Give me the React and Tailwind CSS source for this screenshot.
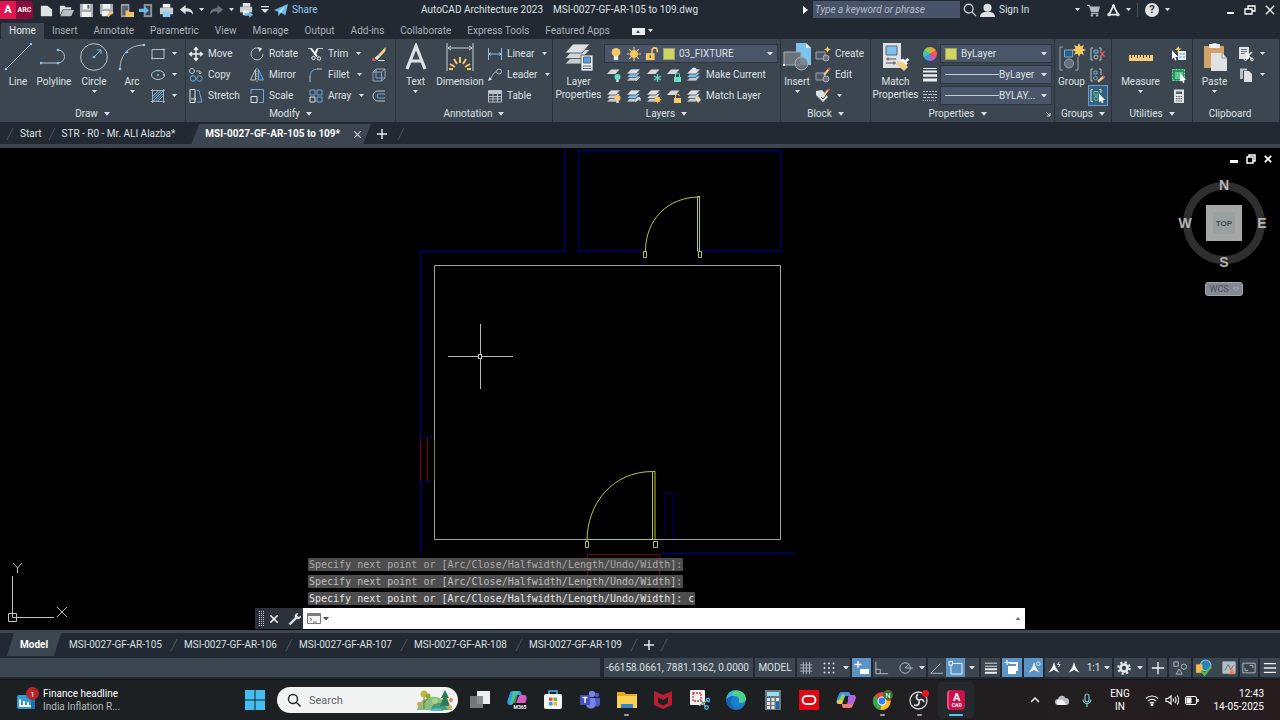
import React, { useState } from 'react';

// ---------- shared bits ----------

const Caret = ({ className = 'w-[7px]' }) => (
  <svg viewBox="0 0 8 5" className={`shrink-0 ${className}`} fill="#d9dee3"><path d="M0 0h8L4 5z" /></svg>
);

const Ico = ({ size = 'size-4', box = '0 0 16 16', children }) => (
  <svg viewBox={box} className={`shrink-0 ${size}`} fill="none" stroke="#b9c2ca" strokeWidth="1">
    {children}
  </svg>
);

const Slash = () => (
  <svg viewBox="0 0 20 20" className="w-5 h-5 shrink-0" stroke="#4c5661"><path d="M7 16L13 4" /></svg>
);

const Dot = ({ x, y, r = 1.3 }) => <circle cx={x} cy={y} r={r} fill="#8cc4ee" stroke="none" />;

// stack of three sheets used by the layer tools, drawn from the bottom up
const Sheets = ({ blue }) => (
  <g stroke="#3c4650" strokeWidth=".7">
    <path d="M5 9h9.500l-4.500 5H.500z" fill="#c4cad0" />
    <path d="M5 5.500h9.500l-4.500 5H.500z" fill={blue ? '#7fbce8' : '#ccd1d6'} />
    <path d="M5 2h9.500l-4.500 5H.500z" fill="#dde1e4" />
  </g>
);

const Sheet = () => <path d="M5 2.500h8.500l-4 4.500H1z" fill="#d3d8dc" stroke="none" />;

// ---------- ribbon icons ----------

const big = {
  line: <Ico size="size-7" box="0 0 28 28"><path d="M2 26L27 1" /><Dot x={2} y={26} /><Dot x={27} y={1} /></Ico>,
  polyline: <Ico size="size-7" box="0 0 28 28"><path d="M1 20h17a6.500 6.500 0 0 0 0-13" /><Dot x={1} y={20} /><Dot x={18} y={20} /><Dot x={18} y={7} /></Ico>,
  circle: <Ico size="size-7" box="0 0 28 28"><circle cx="14" cy="14" r="13.400" /><path d="M14 14l7-7m-4 0h4v4" stroke="#7db9e6" /><Dot x={14} y={14} /></Ico>,
  arc: <Ico size="size-7" box="0 0 28 28"><path d="M2 26C2 11 12 2 26 2" /><Dot x={2} y={26} /><Dot x={9} y={9} /><Dot x={26} y={2} /></Ico>,
  text: <Ico size="size-7" box="0 0 28 28"><path d="M5 26L14 3l9 23M8.500 18h11" stroke="#dde1e4" strokeWidth="3.200" /></Ico>,
  dimension: (
    <Ico size="size-7" box="0 0 28 28">
      <path d="M1 0v28M27 0v28M2 5h24M5 3L2 5l3 2M23 3l3 2-3 2" stroke="#c9d0d6" />
      <path d="M14 14v6M8 16l3 5M20 16l-3 5M4 21l5 3M24 21l-5 3M3 26h4M25 26h-4" stroke="#f6c865" strokeWidth="2" />
    </Ico>
  ),
  layer: (
    <Ico size="size-7" box="0 0 28 28">
      <g stroke="#3c4650" strokeWidth=".8">
        <path d="M8 12h17l-8 9H0z" fill="#c8cdd2" />
        <path d="M8 6.500h17l-8 9H0z" fill="#d0d5d9" />
        <path d="M8 1h17l-8 9H0z" fill="#dde1e4" />
        <path d="M16 12h12v16H16z" fill="#edf0f2" />
      </g>
      <path d="M18.500 14h7v6h-7z" fill="#4da3de" stroke="#5c6670" /><path d="M18 23h8M18 25.500h8" stroke="#59626c" />
    </Ico>
  ),
  insert: (
    <Ico size="size-7" box="0 0 28 28">
      <path d="M13 0h10l5 5v17H13z" fill="#7cc3ef" stroke="none" /><path d="M23 0l5 5h-5z" fill="#d9eefb" stroke="none" />
      <path d="M1 9h17v13H1z" fill="#6a727b" stroke="#a6adb4" /><circle cx="18.500" cy="20.500" r="6.500" fill="#737b84" fillOpacity=".8" stroke="#a6adb4" />
      <rect x="0" y="21" width="2" height="2" fill="#fff" stroke="none" />
    </Ico>
  ),
  match: (
    <Ico size="size-7" box="0 0 28 28">
      <path d="M1 0h18v25H1z" fill="#dde1e4" stroke="none" /><path d="M4 3h11v9H4z" fill="#7cc3ef" stroke="#5c6670" />
      <path d="M4 16h10M6 14.500v3M4 20h10M12 18.500v3" stroke="#4a525b" />
      <path d="M14 21l6-4 6 7-4 4z" fill="#f2cf85" stroke="none" /><path d="M18 18.500l3-1.500 4 4.500M22.500 19l4-3" stroke="#fff" strokeWidth="2.500" />
    </Ico>
  ),
  group: (
    <Ico size="size-7" box="0 0 28 28">
      <path d="M5 4H2v23h3M17 27h3V14" stroke="#98a1a9" /><path d="M6.500 7h8v7h-8z" fill="#2f5f88" stroke="#77a8cf" />
      <circle cx="11" cy="20.500" r="4.500" fill="#68717a" stroke="#9aa2aa" />
      <path d="M21 0l1.500 3.500L26 2l-1.500 3.500L28 7l-3.500 1.500L26 12l-3.500-1.500L21 14l-1.500-3.500L16 12l1.500-3.500L14 7l3.500-1.500L16 2l3.500 1.500z" fill="#fbcb5f" stroke="none" />
    </Ico>
  ),
  measure: (
    <Ico size="size-7" box="0 0 28 28">
      <path d="M2 12h24v6H2z" fill="#f3cc78" stroke="none" /><path d="M4.500 12v3M7.500 12v2M10.500 12v3M13.500 12v2M16.500 12v3M19.500 12v2M22.500 12v3" stroke="#4f4530" />
    </Ico>
  ),
  paste: (
    <Ico size="size-7" box="0 0 28 28">
      <path d="M3 3h20v22H3z" fill="#d2a267" stroke="none" /><path d="M8 1h3c0-1 5-1 5 0h3v4H8z" fill="#eef0f1" stroke="none" />
      <path d="M10 10h11l5 5v13H10z" fill="#dfe2e5" stroke="none" /><path d="M21 10v5h5" stroke="#939aa1" />
    </Ico>
  ),
};

const bulb = (fill) => <g stroke="none"><circle cx="11.500" cy="10" r="3" fill={fill} /><path d="M10.300 12.500h2.400V15h-2.400z" fill="#dfe3e6" /></g>;
const sun = <g stroke="#f7c863"><circle cx="11.500" cy="11.500" r="2.300" fill="#f7c863" /><path d="M11.500 7.500v8M7.500 11.500h8M8.700 8.700l5.600 5.600M14.300 8.700l-5.600 5.600" strokeWidth=".8" /></g>;
const blockBase = <g><path d="M1 6h9v7H1z" fill="#4f5862" stroke="#9aa3ab" /><circle cx="11" cy="12" r="3" fill="#6b747d" stroke="#a6adb4" /></g>;

const small = {
  rect: <Ico><path d="M2 3.500h12v9H2z" /><Dot x={2} y={12.500} r={1} /><Dot x={14} y={3.500} r={1} /></Ico>,
  ellipse: <Ico><ellipse cx="8" cy="8" rx="6.500" ry="4.500" /><Dot x={8} y={8} r={1} /><Dot x={14} y={8} r={1} /><Dot x={8} y={3.500} r={1} /></Ico>,
  hatch: <Ico><path d="M2.500 1v14M13.500 1v14M1 2.500h14M1 13.500h14" strokeWidth=".8" /><path d="M3 8l5-5M3 13l10-10M8 13l5-5M3 10.500L10.500 3M5.500 13l7.500-7.500" stroke="#7db9e6" /></Ico>,
  move: <Ico><g stroke="#eef1f3" strokeWidth="1.400"><path d="M8 2v12M2 8h12M6 4l2-2.500L10 4M6 12l2 2.500 2-2.500M4 6L1.500 8 4 10M12 6l2.500 2-2.500 2" /></g></Ico>,
  copy: <Ico><circle cx="4" cy="4" r="2.500" /><path d="M8 4h4v3M10.500 5.500L12 7l1.500-1.500" /><circle cx="5" cy="11.500" r="2.800" stroke="#6fa8d6" /><circle cx="11.500" cy="11.500" r="2.800" stroke="#6fa8d6" /></Ico>,
  stretch: <Ico><path d="M2 1.500h5v13H2zM3 11h5M6.500 9.500L8 11l-1.500 1.500" stroke="#dde1e4" /><path d="M9 2.500h2l3 11.500h-5" stroke="#6fa8d6" /></Ico>,
  rotate: <Ico><path d="M11.500 3A6 6 0 1 0 14 8" /><path d="M9 1l4 1.500L10.500 6z" fill="#e3e7ea" stroke="none" /></Ico>,
  mirror: <Ico><path d="M6.500 2.500V13H1.500z" /><path d="M9.500 2.500V13h5z" stroke="#6fa8d6" fill="#355a78" /><path d="M8 1v14" strokeDasharray="1.500 1" /></Ico>,
  scale: <Ico><path d="M2 8.500h6v6H2z" stroke="#dde1e4" /><path d="M2 6V1.500h12.500v13H10" stroke="#6fa8d6" /></Ico>,
  trim: <Ico><path d="M0 2.500h4M9 2.500h6" /><path d="M3 2.500l6 8M9.500 3l-3 6" stroke="#f0f2f4" strokeWidth="2" /><circle cx="5.500" cy="12" r="1.700" stroke="#f0f2f4" /><circle cx="11" cy="12.500" r="1.700" stroke="#f0f2f4" /></Ico>,
  fillet: <Ico><path d="M2 15V9" /><path d="M2 10c0-5 3-8 8-8" stroke="#6fa8d6" /><path d="M9 2h5" /></Ico>,
  array: <Ico><path d="M2 9h5v5H2z" stroke="#dde1e4" /><g stroke="#6fa8d6"><path d="M2 2h5v5H2zM9 2h5v5H9zM9 9h5v5H9z" /></g></Ico>,
  erase: <Ico><path d="M14.500 1L7 9l2 2 5.500-6z" fill="#f6cf83" stroke="none" /><path d="M7 9l2 2-3 3-2.500-2z" fill="#e4e7e9" stroke="none" /><path d="M2 12l3 2.500H1.500z" fill="#e3564c" stroke="#e3564c" /><path d="M7 14.500h7" stroke="#dde1e4" /></Ico>,
  box: <Ico><path d="M2 5h8.500v9H2zM5 2h9v9M2 5l3-3M10.500 5L14 2M10.500 14l3.500-3" stroke="#8fa5b6" /><path d="M5 2v9h9" stroke="#6fa8d6" /></Ico>,
  offset: <Ico><path d="M14 3H7a5 5 0 0 0 0 10h7" /><path d="M14 6H8a2 2 0 0 0 0 4h6" stroke="#6fa8d6" /></Ico>,
  linear: <Ico><path d="M1.500 2v12M14.500 2v12M2 8h12" stroke="#8fbde0" /><path d="M4 6.500L2 8l2 1.500M12 6.500L14 8l-2 1.500" stroke="#8fbde0" /></Ico>,
  leader: <Ico><circle cx="12" cy="4.500" r="2.500" /><path d="M9.500 5C6 5 6 9 3 12" /><path d="M1 14l1.500-4 2.500 2.500z" fill="#dde1e4" stroke="none" /></Ico>,
  table: <Ico><path d="M1.500 2.500h13v11.500h-13zM1.500 5.500h13M1.500 8.500h13M1.500 11h13M6 5v9M10.500 5v9" /><path d="M2 3h12v2H2z" fill="#b9c2ca" stroke="none" /></Ico>,
  lyOff: <Ico><Sheet />{bulb('#67e0c3')}</Ico>,
  lyIso: <Ico><Sheets blue /><path d="M10 14l4-4" stroke="#fff" /></Ico>,
  lyFreeze: <Ico><Sheet /><path d="M11.500 7v8M8 9l7 4M15 9l-7 4" stroke="#5fdcbc" strokeWidth="1.300" /></Ico>,
  lyLock: <Ico><Sheet /><path d="M8 10h7v5H8z" fill="#67e0c3" stroke="none" /><path d="M9.500 10V8a2 2 0 0 1 4 0v2" stroke="#67e0c3" /></Ico>,
  lyCurrent: <Ico><Sheets blue /><circle cx="8" cy="3" r="2.500" fill="#e3e7ea" stroke="none" /></Ico>,
  lyOn: <Ico><Sheets />{bulb('#f7c863')}</Ico>,
  lyUniso: <Ico><Sheets blue /><path d="M9 14l5-4M11 10h3v3" stroke="#fff" /></Ico>,
  lyThaw: <Ico><Sheets />{sun}</Ico>,
  lyUnlock: <Ico><Sheet /><path d="M8 10h7v5H8z" fill="#f7c863" stroke="none" /><path d="M9.500 10V8.500a2 2 0 0 1 4-.500" stroke="#f7c863" /></Ico>,
  lyMatch: <Ico><Sheets /><path d="M9 10l3-2 3 4-3 3z" fill="#f0dcae" stroke="none" /></Ico>,
  create: <Ico>{blockBase}<path d="M12.500 0l1 2.500L16 3.500l-2.500 1-1 2.500-1-2.500L9 3.500l2.500-1z" fill="#fbcb5f" stroke="none" /></Ico>,
  edit: <Ico>{blockBase}<path d="M9 8l5-6" stroke="#f2c98b" strokeWidth="2" /><path d="M13 3l2-2" stroke="#e3564c" strokeWidth="2" /></Ico>,
  tag: <Ico><path d="M1 3l6-1 6 7-5 5-7-7z" fill="#dde1e4" stroke="none" /><path d="M6 9l2 2 4-5" stroke="#3c4650" /><path d="M9 7l4-5" stroke="#f2c98b" strokeWidth="2" /><path d="M13 3l1.500-2" stroke="#e3564c" strokeWidth="2" /></Ico>,
  wheel: (
    <Ico>
      <g stroke="none">
        <path d="M8 8V1a7 7 0 0 1 6 3.500z" fill="#f59a3c" /><path d="M8 8l6-3.500a7 7 0 0 1 0 7z" fill="#ee5a4a" /><path d="M8 8l6 3.500A7 7 0 0 1 8 15z" fill="#c25bd0" />
        <path d="M8 8v7a7 7 0 0 1-6-3.500z" fill="#4c8fe8" /><path d="M8 8l-6 3.500a7 7 0 0 1 0-7z" fill="#3fc7b5" /><path d="M8 8L2 4.500A7 7 0 0 1 8 1z" fill="#8bd04f" />
      </g>
    </Ico>
  ),
  weight: <Ico><g stroke="#eceff1"><path d="M1 1.500h14" /><path d="M1 4.500h14" strokeWidth="2" /><path d="M1 8.500h14" strokeWidth="2.500" /><path d="M1 13h14" strokeWidth="3" /></g></Ico>,
  ltype: <Ico><path d="M1 3.500h14" strokeDasharray="2 1" /><path d="M1 6.500h14" strokeDasharray="4 1" /><path d="M1 9.500h14" strokeDasharray="3 1" /><path d="M1 12.500h14" strokeDasharray="1 1" /></Ico>,
  ungroup: <Ico><path d="M3 2H1v12h2M9 14h2V9M9 2h2v3" /><path d="M4 4h4v3H4z" fill="#2f5f88" stroke="#77a8cf" /><circle cx="6" cy="11" r="2" /><path d="M10 5.500l4.500 5M14.500 5.500l-4.500 5" stroke="#e3564c" strokeWidth="1.500" /></Ico>,
  groupEdit: <Ico><path d="M3 2H1v12h2M9 2h2v6" /><path d="M4 4h3v3H4z" stroke="#77a8cf" /><circle cx="5.500" cy="11" r="1.800" stroke="#77a8cf" /><path d="M8 14.500l6-5" stroke="#f2c98b" strokeWidth="2.300" /><path d="M13 10.500l1.500-1.500" stroke="#e3564c" strokeWidth="2" /></Ico>,
  groupSel: <Ico><path d="M3 1.500H1v12h2M9 1.500h2V5" stroke="#dde1e4" /><path d="M4 3.500h4v3.500H4z" stroke="#52d48a" /><circle cx="6" cy="10.500" r="2" stroke="#52d48a" /><path d="M9 5.500l6 6.500-2.500.2 1 2.500-1.500.600-1-2.500-2 1.700z" fill="#fff" stroke="none" /></Ico>,
  qselect: <Ico><path d="M7 5h8v9H7z" fill="#eaf1f6" stroke="none" /><path d="M8.500 8h2M8.500 11h2M12 8h2M12 11h2" stroke="#3a8cd0" /><path d="M1 4l6 7-2.500 0 1 3-1.500.500-1-3L1 13z" fill="#fff" stroke="none" /><path d="M8 0L4 4h3L6 6.500l4.500-4H8z" fill="#fbcb5f" stroke="none" /></Ico>,
  selAll: <Ico><path d="M1.500 2.500h12v11h-12z" fill="#2f8f5b" stroke="#67e0a3" strokeDasharray="2 1" /><path d="M4 5h8v7H4z" fill="#56cf8a" stroke="none" /><path d="M9 6l6 7-2.500 0 1 2.500-1.500.500-1-2.500L9 14.500z" fill="#fff" stroke="none" /></Ico>,
  calc: <Ico><path d="M3 1.500h10v13.500H3z" fill="#dfe2e5" stroke="none" /><path d="M5 3.500h6V6H5z" fill="#56606a" stroke="none" /><path d="M5 8.500h6M5 10.700h6M5 13h6" stroke="#56606a" strokeWidth="1.200" strokeDasharray="1.400 .9" /></Ico>,
  cut: <Ico><path d="M1 1h10v12H1z" fill="#dfe2e5" stroke="none" /><path d="M3 3.500h6M3 5.500h6M3 7.500h4" stroke="#6a737c" /><path d="M7 7l7 6M14 6l-6 6" stroke="#f0f2f4" strokeWidth="1.500" /><circle cx="7.500" cy="13" r="1.500" stroke="#f0f2f4" /><circle cx="14" cy="13.500" r="1.300" stroke="#f0f2f4" /></Ico>,
  clip: <Ico><path d="M2 1.500h7l0 2H5V12H2z" fill="#b9c0c6" stroke="none" /><path d="M6 4h5l3 3v8H6z" fill="#dfe2e5" stroke="none" /></Ico>,
};

// ---------- ribbon building blocks ----------

const BigButton = ({ icon, label, caret, width }) => (
  <button type="button" className={`${width} flex flex-col items-center shrink-0`}>
    <span className="h-8">{big[icon]}</span>
    {label.split(' ').map(word => <span key={word} className="leading-[13px]">{word}</span>)}
    {caret && <Caret className="w-[5px] mt-0.5" />}
  </button>
);

const Tool = ({ icon, label, caret, active }) => (
  <button
    type="button"
    aria-label={label || icon}
    className={`h-[21px] flex items-center shrink-0 ${active ? 'bg-[#37607f] outline outline-[#5fa2cf] -outline-offset-1' : ''}`}
  >
    <span className="w-5 flex justify-center">{small[icon]}</span>
    {label && <span className="ml-0.5">{label}</span>}
    {caret && <Caret className={label ? 'w-[5px] ml-2' : 'w-[5px] ml-1'} />}
  </button>
);

const Column = ({ tools, width = '' }) => (
  <div className={`flex flex-col items-start ${width}`}>
    {tools.map(([icon, label, caret, active]) => (
      <Tool key={icon} icon={icon} label={label} caret={caret} active={active} />
    ))}
  </div>
);

const Panel = ({ title, width, caret = true, corner, children }) => (
  <section className={`${width} flex flex-col pt-1 border-r border-[#2a323b]`}>
    <div className="flex h-[63px]">{children}</div>
    <div className="h-4 flex items-center">
      <button type="button" className="flex-1 flex items-center justify-center gap-1.5">
        {title}
        {caret && <Caret className="w-[6px]" />}
      </button>
      {corner && <svg viewBox="0 0 8 8" className="size-2 mr-0.5" stroke="#d9dee3" fill="none"><path d="M2 2l4 4M6 3v3H3" /></svg>}
    </div>
  </section>
);

const SelectBox = ({ label, value, children }) => (
  <div className="h-[19px] flex items-center gap-1 px-1 bg-[#4a556a] border border-[#2d3640] grow min-w-0">
    {children}
    <select aria-label={label} className="flex-1 min-w-0 appearance-none outline-none bg-transparent" defaultValue={value}>
      <option>{value}</option>
    </select>
    <Caret className="w-[6px]" />
  </div>
);

const Swatch = () => <span className="size-3 bg-[#cdd663] border border-[#9aa364] shrink-0" />;
const LineSample = () => <span className="w-[54px] h-px bg-[#c5cbd3] shrink-0 -mr-1" />;

const Ribbon = () => (
  <div className="flex h-[83px] shrink-0 bg-[#3c4650]">
    <Panel title="Draw" width="w-[186px]">
      <BigButton icon="line" label="Line" width="w-9" />
      <BigButton icon="polyline" label="Polyline" width="w-9" />
      <BigButton icon="circle" label="Circle" caret width="w-11" />
      <BigButton icon="arc" label="Arc" caret width="w-8" />
      <Column tools={[['rect', '', true], ['ellipse', '', true], ['hatch', '', true]]} />
    </Panel>
    <Panel title="Modify" width="w-[210px]">
      <Column width="w-[61px]" tools={[['move', 'Move'], ['copy', 'Copy'], ['stretch', 'Stretch']]} />
      <Column width="w-[59px]" tools={[['rotate', 'Rotate'], ['mirror', 'Mirror'], ['scale', 'Scale']]} />
      <Column width="w-[63px]" tools={[['trim', 'Trim', true], ['fillet', 'Fillet', true], ['array', 'Array', true]]} />
      <Column tools={[['erase'], ['box'], ['offset']]} />
    </Panel>
    <Panel title="Annotation" width="w-[157px]">
      <BigButton icon="text" label="Text" caret width="w-[39px]" />
      <BigButton icon="dimension" label="Dimension" width="w-[50px]" />
      <Column tools={[['linear', 'Linear', true], ['leader', 'Leader', true], ['table', 'Table']]} />
    </Panel>
    <Panel title="Layers" width="w-[228px]">
      <BigButton icon="layer" label="Layer Properties" width="w-[51px]" />
      <div className="flex-1 flex flex-col pr-0.5">
        <div className="h-[21px] flex items-center">
          <SelectBox label="Layer" value="03_FIXTURE">
            <Ico size="size-[14px]"><circle cx="8" cy="6" r="5" fill="#f7c863" stroke="none" /><path d="M5.500 10.500h5V15h-5z" fill="#f1f3f4" stroke="none" /></Ico>
            <Ico size="size-[14px]"><g stroke="#f7c863"><circle cx="8" cy="8" r="4" fill="#f7c863" /><path d="M8 0v16M0 8h16M2.500 2.500l11 11M13.500 2.500l-11 11" strokeWidth="1.300" /></g></Ico>
            <Ico size="size-[14px]"><path d="M1 7h10v8H1z" fill="#f7c863" stroke="none" /><path d="M8 7V4a3 3 0 0 1 6 0v2" stroke="#f7c863" strokeWidth="1.800" /><path d="M6 9.500v3" stroke="#4a556a" strokeWidth="1.500" /></Ico>
            <Swatch />
          </SelectBox>
        </div>
        <div className="flex">
          {['lyOff', 'lyIso', 'lyFreeze', 'lyLock'].map(i => <Tool key={i} icon={i} />)}
          <Tool icon="lyCurrent" label="Make Current" />
        </div>
        <div className="flex">
          {['lyOn', 'lyUniso', 'lyThaw', 'lyUnlock'].map(i => <Tool key={i} icon={i} />)}
          <Tool icon="lyMatch" label="Match Layer" />
        </div>
      </div>
    </Panel>
    <Panel title="Block" width="w-[90px]">
      <BigButton icon="insert" label="Insert" caret width="w-8" />
      <Column tools={[['create', 'Create'], ['edit', 'Edit'], ['tag', '', true]]} />
    </Panel>
    <Panel title="Properties" width="w-[184px]" corner>
      <BigButton icon="match" label="Match Properties" width="w-[49px]" />
      <Column tools={[['wheel'], ['weight'], ['ltype']]} />
      <div className="flex-1 flex flex-col pr-0.5">
        <div className="h-[21px] flex items-center"><SelectBox label="Object color" value="ByLayer"><Swatch /></SelectBox></div>
        <div className="h-[21px] flex items-center"><SelectBox label="Lineweight" value="ByLayer"><LineSample /></SelectBox></div>
        <div className="h-[21px] flex items-center"><SelectBox label="Linetype" value="BYLAY..."><LineSample /></SelectBox></div>
      </div>
    </Panel>
    <Panel title="Groups" width="w-[57px]">
      <BigButton icon="group" label="Group" width="w-[33px]" />
      <Column tools={[['ungroup'], ['groupEdit'], ['groupSel', '', false, true]]} />
    </Panel>
    <Panel title="Utilities" width="w-[81px]">
      <BigButton icon="measure" label="Measure" caret width="w-[57px]" />
      <Column tools={[['qselect'], ['selAll'], ['calc']]} />
    </Panel>
    <Panel title="Clipboard" width="flex-1 pr-3" caret={false}>
      <BigButton icon="paste" label="Paste" caret width="w-[43px]" />
      <Column tools={[['cut', '', true], ['clip', '', true]]} />
    </Panel>
  </div>
);

// ---------- title bar ----------

const paper = '#dfe2e5';

const quickTools = [
  ['New', <path key="a" d="M2 3h7l5 4v7H2z" fill={paper} />],
  ['Open', <g key="a"><path d="M1 3h5l1 1.500h6V7H4l-3 6z" fill={paper} /><path d="M4.500 7.500H16L13 14H1.500z" fill="#b8bfc5" /></g>],
  ['Save', <g key="a"><path d="M1 1h14v14H1z" fill="#a5acb3" /><path d="M4 1h8v6H4zM3 9.500h10V15H3z" fill="#f0f2f3" /><path d="M9 2h2v4H9z" fill="#59626c" /></g>],
  ['Save As', <g key="a"><path d="M1 1h14v11H1z" fill="#a5acb3" /><path d="M4 1h8v5H4zM3 8.500h8V14H3z" fill="#f0f2f3" /><path d="M8 13l6-5 1.500 2-5.500 5z" fill="#f2c26b" /></g>],
  ['Open from Web', <g key="a"><path d="M2 1h9v14H2z" fill="#9aa1a8" /><path d="M3.500 3h6v10h-6z" fill="#59626c" /><path d="M7 8h3l1 1.500h5V15H7z" fill="#f2c26b" /></g>],
  ['Save to Web', <g key="a"><path d="M5 1h9v14H5z" fill="#8c949c" /><path d="M7 3h5v10H7z" fill="#3d4650" /><path d="M0 6h6V3.500L10.500 8 6 12V9.500H0z" fill="#6cb8ea" /></g>],
  ['Plot', <g key="a"><path d="M4 1h8v4H4z" fill="#f0f2f3" /><path d="M1 5h14v7H1z" fill="#c9ced3" /><path d="M4 9h8v6H4z" fill="#8ecdf3" /></g>],
];

const SolidIcon = ({ children, size = 'size-[15px]' }) => (
  <svg viewBox="0 0 16 16" className={size} fill="#dfe2e5">{children}</svg>
);

const IconButton = ({ label, width = 'w-5', children }) => (
  <button type="button" aria-label={label} className={`${width} h-full flex items-center justify-center shrink-0`}>{children}</button>
);

const TitleBar = () => (
  <header className="h-5 shrink-0 flex items-center">
    <div className="w-[421px] flex items-center h-[18px] shrink-0">
      <button type="button" className="w-[33px] h-full mr-[3px] flex items-center rounded-r-sm bg-[#8c0b3c] text-white shrink-0">
        <span className="w-4 h-full flex items-center justify-center bg-[#e01552] font-bold text-[11px]">A</span>
        <span className="flex-1 text-center font-bold text-[7px]">ARC</span>
      </button>
      {quickTools.map(([name, icon]) => <IconButton key={name} label={name}><SolidIcon>{icon}</SolidIcon></IconButton>)}
      <IconButton label="Undo"><SolidIcon><path d="M1 7l6-5v3.500c5 0 8 2 8 7-2-3-4-3.500-8-3.500V12z" /></SolidIcon></IconButton>
      <IconButton label="Undo list" width="w-2.5"><Caret className="w-[5px]" /></IconButton>
      <IconButton label="Redo"><SolidIcon><path d="M15 7L9 2v3.500c-5 0-8 2-8 7 2-3 4-3.500 8-3.500V12z" fill="#68727c" /></SolidIcon></IconButton>
      <IconButton label="Redo list" width="w-2.5"><Caret className="w-[5px]" /></IconButton>
      <IconButton label="Batch plot"><SolidIcon><path d="M4 0h8v4H4z" /><path d="M1 4h13v6H1z" fill="#c9ced3" /><path d="M4 8h7v5H4z" fill="#f0f2f3" /><path d="M6 11h5V9l4 3.500-4 3.500v-2.500H6z" fill="#6cb8ea" /></SolidIcon></IconButton>
      <IconButton label="Customize" width="w-[18px]"><svg viewBox="0 0 8 8" className="size-2" fill="#dfe2e5"><path d="M0 0h8v1.300H0zM0 3h8L4 7z" /></svg></IconButton>
      <button type="button" className="flex items-center text-[#8fc9f0]">
        <SolidIcon size="size-3.5"><path d="M0 8L16 1l-3 13-5-3-3 4-.500-5z" fill="#6cb8ea" /><path d="M5 10l8-7-5 8" fill="#bfe3fa" /></SolidIcon>
        <span className="ml-1">Share</span>
      </button>
    </div>
    <h1 className="flex gap-2.5 whitespace-nowrap"><span>AutoCAD Architecture 2023</span><span>MSI-0027-GF-AR-105 to 109.dwg</span></h1>
    <div className="ml-auto h-full flex items-center shrink-0">
      <svg viewBox="0 0 5 8" className="h-2 mr-[5px]" fill="#fff"><path d="M0 0l5 4-5 4z" /></svg>
      <input
        aria-label="Help search"
        placeholder="Type a keyword or phrase"
        className="w-[147px] h-[17px] -mt-0.5 px-0.5 bg-[#48536a] italic outline-none placeholder:text-[#b6bdc6]"
      />
      <IconButton label="Search"><svg viewBox="0 0 16 16" className="size-3.5" fill="none" stroke="#c5cbd1" strokeWidth="1.600"><circle cx="6.500" cy="6.500" r="5" /><path d="M10 10l5 5" /></svg></IconButton>
      <button type="button" className="w-[92px] flex items-center gap-1">
        <SolidIcon><circle cx="8" cy="5" r="4.300" /><path d="M0 15c0-4 3-5 5-5.500h6c2 .5 5 1.500 5 5.500z" /></SolidIcon>
        Sign In
      </button>
      <IconButton label="Account menu" width="w-[11px]"><Caret className="w-[5px]" /></IconButton>
      <IconButton label="App Store"><svg viewBox="0 0 16 16" className="size-[13px]" fill="#b4bac0"><path d="M0 1h3l1 2h12l-2 7H5L2.500 2.500H0zM5 11h9v1.200H5z" /><circle cx="6" cy="14" r="1.500" /><circle cx="12.500" cy="14" r="1.500" /></svg></IconButton>
      <IconButton label="Connect"><svg viewBox="0 0 16 16" className="size-[13px]" fill="none" stroke="#e5e8ea" strokeWidth="2.200"><path d="M8 2L2.500 13h11z" /><circle cx="8" cy="2.500" r="1" /><circle cx="2.500" cy="13" r="1" /><circle cx="13.500" cy="13" r="1" /></svg></IconButton>
      <IconButton label="Connect menu" width="w-2.5"><Caret className="w-[5px]" /></IconButton>
      <span className="mx-1 w-px h-3.5 bg-[#454e59]" />
      <IconButton label="Help"><span className="size-[14px] rounded-full bg-[#dfe2e5] text-[#30383f] text-[11px] leading-[14px] font-bold">?</span></IconButton>
      <IconButton label="Help menu" width="w-2.5"><Caret className="w-[5px]" /></IconButton>
      <div className="ml-12 h-full flex">
        <IconButton label="Minimize"><span className="w-[7px] h-0.5 mt-1.5 bg-white" /></IconButton>
        <IconButton label="Restore"><svg viewBox="0 0 12 12" className="size-3" fill="none" stroke="#fff" strokeWidth="1.300"><path d="M1 5h7v5H1zM4 5V2h7v5H8" /></svg></IconButton>
        <IconButton label="Close"><svg viewBox="0 0 12 12" className="size-2.5" stroke="#fff" strokeWidth="1.600"><path d="M1 1l10 10M11 1L1 11" /></svg></IconButton>
      </div>
    </div>
  </header>
);

const ribbonTabs = ['Home', 'Insert', 'Annotate', 'Parametric', 'View', 'Manage', 'Output', 'Add-ins', 'Collaborate', 'Express Tools', 'Featured Apps'];

const RibbonTabs = ({ active, onSelect }) => (
  <nav className="h-[19px] pt-[3px] pl-px flex shrink-0">
    {ribbonTabs.map(tab => (
      <button
        key={tab}
        type="button"
        onClick={() => onSelect(tab)}
        className={`px-2 whitespace-nowrap ${tab === active ? 'bg-[#3c4650] text-[#e3e6e9]' : 'text-[#a9b1b9]'}`}
      >
        {tab}
      </button>
    ))}
    <button type="button" aria-label="Minimize ribbon" className="ml-3.5 flex items-center gap-[3px]">
      <span className="w-[13px] h-[7px] bg-[#eceff1] flex items-center justify-center">
        <svg viewBox="0 0 4 3" className="w-1" fill="#4a525b"><path d="M0 3h4L2 0z" /></svg>
      </span>
      <Caret className="w-[5px]" />
    </button>
  </nav>
);

const Plus = () => <svg viewBox="0 0 10 10" className="size-2.5" stroke="#e6e9ec" strokeWidth="1.500"><path d="M5 0v10M0 5h10" /></svg>;

const FileTabs = () => (
  <nav className="h-[22px] pt-0.5 shrink-0 flex items-center">
    <Slash />
    <button type="button">Start</button>
    <Slash />
    <button type="button">STR - R0 - Mr. ALI Alazba*</button>
    <div className="ml-4 pl-3.5 pr-2 h-full flex items-center gap-3.5 bg-[#3c4650] font-bold text-white [clip-path:polygon(8px_0,100%_0,calc(100%-8px)_100%,0_100%)]">
      <button type="button">MSI-0027-GF-AR-105 to 109*</button>
      <button type="button" aria-label="Close tab"><svg viewBox="0 0 8 8" className="size-[7px] mr-0.5" stroke="#cdd2d7" strokeWidth="1.300"><path d="M0 0l8 8M8 0L0 8" /></svg></button>
    </div>
    <button type="button" aria-label="New drawing" className="ml-1.5 mr-1"><Plus /></button>
    <Slash />
  </nav>
);

// ---------- drawing area ----------

const FloorPlan = () => (
  <svg viewBox="0 148 1280 482" preserveAspectRatio="xMidYMid slice" className="absolute inset-0 size-full" fill="none">
    <g stroke="#000070">
      <path d="M564.500 148v103.500H420.500V553.500M578.500 150.500H781V250.500H700M645 250.500H578.500V150.500" strokeWidth="1.300" />
      <path d="M643.500 258v6M701.500 258v6M420 437.500h13M420 481.500h13M665 539V492.500h8V539" />
      <path d="M660 553.500H795" strokeWidth="1.500" />
    </g>
    <path d="M420.500 438v43M427.500 438v43M587.500 590v-35.500h72V590" stroke="#7c0014" />
    <path d="M434.500 265.500h346v274h-346z" stroke="#a2a2a2" />
    <path d="M434.500 440v40" stroke="#85853a" />
    <path d="M480.500 324v65M448 356.500h65" stroke="#b8b8b8" />
    <rect x="478.500" y="354.500" width="3" height="4" fill="#000" stroke="#c8c8c8" />
    <g stroke="#b9c53b">
      <path d="M645.500 251c0-31 22-54 54-54M697.500 197.500v54M699.500 196.500v55M697 196.500h3" />
      <path d="M643.500 251.500h3v6h-3zM698.500 251.500h3v6h-3z" />
      <path d="M587 541c0-38 26-69.500 65.500-69.500h2.500V540M652.500 471.500V540" />
      <path d="M585.500 541.500h3v6h-3zM653.500 541.500h4v6h-4zM587 539.500h66" />
    </g>
  </svg>
);

const UcsIcon = () => (
  <svg viewBox="0 0 72 64" className="absolute left-0 bottom-1 w-[72px] h-16" fill="none" stroke="#c3c3c3">
    <path d="M12.500 14v41.500H54M8.500 51.500h8v8h-8z" />
    <path d="M13 1l4.500 5L22 1M17.500 6v5M57 45l10 10M67 45L57 55" />
  </svg>
);

const ViewCube = () => (
  <div className="absolute right-2 top-[27px] w-24 flex flex-col items-center">
    <svg viewBox="0 0 96 96" className="size-24" fontFamily="Liberation Sans, sans-serif" fontWeight="bold" textAnchor="middle">
      <circle cx="48" cy="48" r="37" fill="none" stroke="#2f2f2f" strokeWidth="8" />
      <path d="M30 30h36v36H30z" fill="#a6a6a6" />
      <path d="M37 37h22v22H37z" fill="#9aa0a2" />
      <text x="48" y="51" fontSize="8" fill="#454c50">TOP</text>
      <g fontSize="14" fill="#b4b4b4">
        <text x="48" y="15">N</text><text x="48" y="92">S</text><text x="86" y="53">E</text><text x="9" y="53">W</text>
      </g>
    </svg>
    <button type="button" className="mt-[11px] w-[38px] h-[14px] rounded-[3px] bg-[#858993] border border-[#a2a5ad] flex items-center justify-center gap-1 text-[9px] leading-none text-[#4b505c]">
      WCS
      <svg viewBox="0 0 8 5" className="w-[6px]" fill="none" stroke="#a9adb6"><path d="M0 1h8L4 5z" /></svg>
    </button>
  </div>
);

const prompt = 'Specify next point or [Arc/Close/Halfwidth/Length/Undo/Width]:';
const history = [
  { text: prompt, tone: 'text-[#a9a9a9]' },
  { text: prompt, tone: 'text-[#bdbdbd]' },
  { text: `${prompt} c`, tone: 'text-[#e4e4e4]' },
];

const CommandLine = () => (
  <div className="absolute bottom-px inset-x-0 mx-auto w-[770px] max-w-full">
    <div className="ml-[53px] mb-[3px] flex flex-col items-start gap-1">
      {history.map((line, i) => (
        <p key={i} className={`h-[13px] px-px rounded-[1px] bg-[#555555]/90 font-['DejaVu_Sans_Mono',monospace] text-[10px] leading-[13px] whitespace-pre ${line.tone}`}>
          {line.text}
        </p>
      ))}
    </div>
    <div className="h-[21px] flex items-center bg-white">
      <div className="w-12 h-full flex items-center gap-1.5 px-1 bg-[#2b323c] shrink-0">
        <svg viewBox="0 0 5 15" className="w-[5px] h-[15px] shrink-0" stroke="#c5cbd1" strokeDasharray="1 1"><path d="M.5 0v15M2.500 0v15M4.500 0v15" /></svg>
        <button type="button" aria-label="Close command line"><svg viewBox="0 0 8 8" className="size-2" stroke="#fff" strokeWidth="1.500"><path d="M0 0l8 8M8 0L0 8" /></svg></button>
        <button type="button" aria-label="Customize" className="ml-1">
          <svg viewBox="0 0 14 14" className="size-[14px]"><path d="M1.500 12.500L8 6" stroke="#dfe2e5" strokeWidth="2.400" /><path d="M13 3.500L10.500 5 9 3.500 10.500 1C8 .5 6 3 7 5.500L8.500 7C11 8 13.500 6 13 3.500z" fill="#dfe2e5" /></svg>
        </button>
      </div>
      <button type="button" aria-label="Recent commands" className="ml-1 flex items-center gap-0.5">
        <svg viewBox="0 0 14 11" className="w-[14px]" fill="#f4f4f4" stroke="#7b7b7b"><path d="M.5.5h13v10H.500z" /><path d="M1 2h12" strokeWidth="2" /><path d="M2.500 5L5 6.500 2.500 8M6 9h4" fill="none" /></svg>
        <svg viewBox="0 0 8 5" className="w-[6px]" fill="#555"><path d="M0 0h8L4 5z" /></svg>
      </button>
      <input aria-label="Command" className="flex-1 h-full px-1 bg-white text-black outline-none font-['DejaVu_Sans_Mono',monospace]" />
      <svg viewBox="0 0 8 5" className="w-[6px] mr-1" fill="#6d6d6d"><path d="M0 5h8L4 0z" /></svg>
    </div>
  </div>
);

const DrawingArea = () => (
  <main className="relative flex-1 min-h-[300px] overflow-hidden bg-black border-t-4 border-b-[3px] border-[#3c4650]">
    <FloorPlan />
    <div className="absolute right-1 top-1 flex h-3.5 gap-px">
      <IconButton label="Minimize drawing" width="w-4"><span className="w-2 h-[3px] mt-1 bg-white" /></IconButton>
      <IconButton label="Restore drawing" width="w-4"><svg viewBox="0 0 10 10" className="size-2.5" fill="none" stroke="#fff" strokeWidth="1.500"><path d="M1 3h6v6H1zM3 3V1h6v6H7" /></svg></IconButton>
      <IconButton label="Close drawing" width="w-4"><svg viewBox="0 0 10 10" className="size-2" stroke="#fff" strokeWidth="2.200"><path d="M1 1l8 8M9 1L1 9" /></svg></IconButton>
    </div>
    <ViewCube />
    <UcsIcon />
    <CommandLine />
  </main>
);

const layouts = ['105', '106', '107', '108', '109'];

const LayoutTabs = () => (
  <nav className="h-[25px] pb-0.5 pl-[7px] shrink-0 flex items-center">
    <button type="button" className="h-full px-[13px] mr-2 bg-[#3c4650] text-white font-bold [clip-path:polygon(7px_0,100%_0,calc(100%-7px)_100%,0_100%)]">Model</button>
    {layouts.map(n => (
      <React.Fragment key={n}>
        <button type="button" className="w-[95px] text-left whitespace-nowrap">{`MSI-0027-GF-AR-${n}`}</button>
        <Slash />
      </React.Fragment>
    ))}
    <button type="button" aria-label="New layout"><Plus /></button>
    <Slash />
  </nav>
);

// ---------- status bar ----------

const Cell = ({ label, width, on, children }) => (
  <button type="button" aria-label={label} className={`${width} h-full flex items-center justify-center gap-2.5 shrink-0 ${on ? 'bg-[#5b93c4]' : 'bg-[#3c4650]'}`}>
    {children}
  </button>
);

const Person = ({ children }) => (
  <Ico size="size-3.5"><path d="M8 1l2 6 4 6-4-1.500L8 10l-2 1.500L2 13l4-6z" fill="#eef1f3" stroke="none" />{children}</Ico>
);

const StatusBar = () => (
  <footer className="h-[22px] pb-[2px] shrink-0 flex gap-0.5 border-b border-[#14181c]">
    <div className="flex-1 bg-[#3c4650] mr-0.5" />
    <div className="w-[149px] pr-1 bg-[#3c4650] flex items-center justify-end">-66158.0661, 7881.1362, 0.0000</div>
    <button type="button" className="w-10 bg-[#3c4650]">MODEL</button>
    <Cell label="Grid" width="w-[53px]">
      <Ico size="size-3.5"><path d="M5 1v14M8.500 1v14M12 1v14M1 4.500h14M1 8h14M1 11.500h14" /></Ico>
      <Ico size="size-3"><g fill="#dfe2e5" stroke="none">{[2, 8, 14].map(y => [2, 8, 14].map(x => <circle key={`${x}-${y}`} cx={x} cy={y} r="1.300" />))}</g></Ico>
      <Caret className="w-[6px] -ml-0.5" />
    </Cell>
    <Cell label="Dynamic input" width="w-[19px]" on><Ico><path d="M4 1v7M.5 4.500h7" stroke="#fff" strokeWidth="1.300" /><path d="M6 9h9v5H6z" fill="#fff" stroke="none" /></Ico></Cell>
    <Cell label="Ortho and polar" width="w-[53px]">
      <Ico size="size-3.5"><path d="M1 1v13.500h14M1 9.500h5v5" /></Ico>
      <Ico size="size-3.5"><circle cx="7" cy="8" r="6" /><path d="M7 8h9M7 8l5-5" /></Ico>
      <Caret className="w-[6px] -ml-1" />
    </Cell>
    <div className="flex">
      <Cell label="Object snap tracking" width="w-[18px]"><Ico size="size-3.5"><path d="M1 14h14M1 14L12 3" /></Ico></Cell>
      <Cell label="Object snap" width="w-[19px]" on><Ico><path d="M3 3.500h11v10.500H3z" stroke="#eef1f3" /><rect x="1" y="1.500" width="3.500" height="3.500" fill="#5b93c4" stroke="#eef1f3" /></Ico></Cell>
      <Cell label="Snap settings" width="w-3.5"><Caret className="w-[6px]" /></Cell>
    </div>
    <Cell label="Lineweight" width="w-[19px]"><Ico size="size-3.5"><path d="M1 2.500h14M1 6h14" stroke="#eef1f3" /><path d="M1 9.500h14M1 13.500h14" stroke="#eef1f3" strokeWidth="2.200" /></Ico></Cell>
    <Cell label="Selection cycling" width="w-5" on><Ico><path d="M5 3h8v8" stroke="#fff" strokeWidth="2" /><path d="M4 6h8v8H4z" fill="#fff" stroke="none" /><path d="M3 0v5M.500 2.500h5" stroke="#fff" /></Ico></Cell>
    <Cell label="Annotation visibility" width="w-[19px]" on><Person><circle cx="13" cy="3" r="2" stroke="#eef1f3" /></Person></Cell>
    <Cell label="Annotation scale" width="w-[67px]">
      <span className="flex gap-1.5 items-center"><Person><path d="M14 1l-2 3h3l-2 3" stroke="#eef1f3" /></Person><Person /></span>
      <span className="flex gap-1 items-center -ml-1">1:1<Caret className="w-[6px]" /></span>
    </Cell>
    <Cell label="Workspace" width="w-8">
      <Ico size="size-3.5"><circle cx="8" cy="8" r="4" stroke="#e6e9ec" strokeWidth="3" /><circle cx="8" cy="8" r="6.500" stroke="#e6e9ec" strokeWidth="2.500" strokeDasharray="2.500 2.600" /></Ico>
      <Caret className="w-[6px] -ml-1" />
    </Cell>
    <Cell label="Annotation monitor" width="w-[19px]"><Ico size="size-3.5"><path d="M8 1v14M1 8h14" stroke="#eef1f3" strokeWidth="1.500" /></Ico></Cell>
    <Cell label="Isolate objects" width="w-[22px]"><Ico size="size-3.5"><path d="M1 1h5v5H1z" /><circle cx="12.500" cy="6.500" r="3" /><path d="M7 9l3.500 6h-7z" /></Ico></Cell>
    <Cell label="Hardware" width="w-[45px]">
      <Ico size="size-[17px]"><circle cx="10" cy="6" r="5" fill="#2e7fc0" stroke="#8fc7ef" /><path d="M1 5h6v8H1z" fill="#f0c04d" stroke="none" /><path d="M6 11l3 3.500L15 7" stroke="#52b948" strokeWidth="2.300" /></Ico>
      <Ico size="size-3.5"><path d="M1 1h14v13H1z" fill="#b7bdc3" /><path d="M3 11l4-7 3 6 3-5" stroke="#59626c" /><path d="M11 8l4 7H8z" fill="#f0815e" stroke="none" /></Ico>
    </Cell>
    <Cell label="Clean screen" width="w-[18px]"><Ico size="size-3.5"><path d="M1 2.500h14v11H1zM9 5h3.500v3M7 11H3.500V8" /></Ico></Cell>
    <Cell label="Customization" width="w-5"><Ico size="size-3.5"><path d="M1 3h14M1 8h14M1 13h14" stroke="#eef1f3" strokeWidth="1.600" /></Ico></Cell>
  </footer>
);

// ---------- windows taskbar ----------

const App20 = ({ children }) => <svg viewBox="0 0 20 20" className="size-5" fill="none">{children}</svg>;

const apps = [
  ['Task view', <App20 key="i"><path d="M7 1h13v13H7z" fill="#eceeef" /><path d="M0 6h13v12H0z" fill="#7d8285" fillOpacity=".9" /></App20>],
  ['Microsoft 365', (
    <App20 key="i">
      <path d="M6 1h6c2 0 2 2 3 4H9L5 15H3c-3 0-3-3-2-6l2-6c.500-1.500 1.500-2 3-2z" fill="#2f9de6" /><path d="M6 1h6l-4 13H3l2-9z" fill="#4fce7a" fillOpacity=".7" />
      <path d="M14 5h3c3 0 3 3 2 6l-2 5H8l3-8c.500-2 1.500-3 3-3z" fill="#d85bc5" /><path d="M6 13h14v7H6z" fill="#15181a" />
      <text x="13" y="18.500" fontSize="5" fontWeight="bold" fill="#fff" textAnchor="middle">M365</text>
    </App20>
  )],
  ['Store', <App20 key="i"><path d="M6 4V1h8v3" stroke="#4fb3e8" strokeWidth="1.500" /><rect x="1" y="4" width="18" height="15" rx="2" fill="#f3f5f6" /><path d="M6 7.500h3.500V11H6z" fill="#e8523a" /><path d="M10.500 7.500H14V11h-3.500z" fill="#6fb83c" /><path d="M6 12h3.500v3.500H6z" fill="#2f9de6" /><path d="M10.500 12H14v3.500h-3.500z" fill="#f4b52e" /></App20>],
  ['Teams', <App20 key="i"><circle cx="12" cy="4" r="3.200" fill="#7b83eb" /><circle cx="17" cy="5" r="2.200" fill="#5059c9" /><path d="M6 8h10v6c0 6-10 6-10 0z" fill="#7b83eb" /><path d="M15 8h5v5c0 3-2 4-4 3.500z" fill="#5059c9" /><path d="M0 5h10v10H0z" fill="#4650b8" /><path d="M2.500 7.500h5M5 7.500V13" stroke="#fff" strokeWidth="1.400" /></App20>],
  ['File Explorer', <App20 key="i"><path d="M0 2h7l2 2h11v14H0z" fill="#e9a825" /><path d="M0 6h20v12H0z" fill="#fbd152" /><path d="M4 14h12v4H4z" fill="#2e87cc" /></App20>, true],
  ['McAfee', <App20 key="i"><path d="M1 1l9 4 9-4v14l-9 4-9-4z" fill="#b9202f" /><path d="M5 7l5 3 5-3v6l-5 2.500L5 13z" fill="#1c2023" /></App20>],
  ['Snipping Tool', <App20 key="i"><rect x="0" y="0" width="15" height="15" rx="1" fill="#f0f2f3" /><path d="M3 3h8v8H3z" stroke="#d8372c" strokeWidth="1.300" strokeDasharray="2 1" /><path d="M9 16l9-6M10 9l6 8" stroke="#8a9298" strokeWidth="1.500" /><circle cx="16.500" cy="17.500" r="1.800" stroke="#4fb3e8" strokeWidth="1.300" /><circle cx="18" cy="10" r="1.700" stroke="#4fb3e8" strokeWidth="1.300" /></App20>],
  ['Edge', <App20 key="i"><circle cx="10" cy="10" r="9.800" fill="#1a7fcf" /><path d="M.300 9C1 3.500 5 .2 10 .2c6 0 10 4 10 8.300 0 3-2.500 4.500-5 4.500-2 0-3-1-2-2 1-2-1-5-5-5C4 6 1 8 .300 9z" fill="#4fd08a" /><path d="M.300 9C1 4.500 4 1 8 .5c-3 2-2 5 0 5.500C4 6 1 8 .3 9z" fill="#2fb0ee" /><path d="M8 6c-3 2-4 6-2 9 2 4 7 5 11 2-7 7-17 1-16.500-7C2 7 5 5.500 8 6z" fill="#1565b5" /></App20>],
  ['Calculator', <App20 key="i"><path d="M2 0h16v20H2z" fill="#6e767d" /><path d="M4 2h12v4H4z" fill="#8fe0f2" /><g fill="#dfe3e6"><path d="M4 8h3v3H4zM8.500 8h3v3h-3zM4 12h3v3H4zM8.500 12h3v3h-3zM4 16h3v3H4zM8.500 16h3v3h-3zM13 8h3v3h-3z" /></g><path d="M13 12h3v7h-3z" fill="#0f6cbd" /></App20>],
  ['Oracle', <App20 key="i"><path d="M0 0h20v20H0z" fill="#e30613" /><rect x="3.500" y="6" width="13" height="8" rx="4" stroke="#fff" strokeWidth="1.800" /></App20>],
  ['Copilot', <App20 key="i"><path d="M6 2h6c2 0 2 2 3 4H9L6 14H3c-3 0-3-2-2-5l2-5c.500-1.500 1.500-2 3-2z" fill="#3c8ee8" /><path d="M2 11l5-8 2 3-3 8H3c-1.500 0-2-1.500-1-3z" fill="#8fd05a" /><path d="M1.500 10h5L6 14H3c-2 0-2-2-1.500-4z" fill="#f5c842" /><path d="M14 5h3c3 0 3 3 2 5l-2 5c-.500 2-1.500 3-3 3H8c-2 0-2-2-2-4h5z" fill="#ee7a75" /><path d="M12 7l2-2h3c3 0 3 3 2 5l-2 4h-5z" fill="#b062e0" /></App20>],
  ['Chrome', (
    <App20 key="i">
      <circle cx="9" cy="11" r="9" fill="#e8443a" /><path d="M9 11L1.500 6a9 9 0 0 0 6 14z" fill="#35a852" /><path d="M9 11h8.500a9 9 0 0 1-10 9z" fill="#fbc116" />
      <circle cx="9" cy="11" r="4.500" fill="#fff" /><circle cx="9" cy="11" r="3.400" fill="#3d7ff0" />
      <circle cx="15" cy="5" r="5" fill="#39792c" /><text x="15" y="7.500" fontSize="7" fill="#fff" textAnchor="middle">N</text>
    </App20>
  ), true],
  ['OBS', <App20 key="i"><circle cx="9.500" cy="10.500" r="8.500" fill="#25262a" stroke="#d5d7d9" strokeWidth="1.300" /><path d="M9 4c-3 3-1 6 1 6M15 12c-1-3.500-4-3-5-1M5 15c4 1 6-1 5-4" stroke="#d5d7d9" strokeWidth="1.800" /><circle cx="16.500" cy="3.500" r="3.500" fill="#f0161e" /></App20>, true],
];

const Search = () => (
  <div className="h-[26px] w-[181px] pl-2.5 pr-px mx-3 flex items-center gap-2 rounded-full bg-[#f2f4f4] overflow-hidden shrink-0">
    <svg viewBox="0 0 14 14" className="size-3.5 shrink-0" fill="none" stroke="#26292b" strokeWidth="1.400"><circle cx="6" cy="6" r="4.500" /><path d="M9.500 9.500l4 4" /></svg>
    <input aria-label="Search" placeholder="Search" className="w-0 flex-1 bg-transparent text-[11px] text-black outline-none placeholder:text-[#5e6366]" />
    <svg viewBox="0 0 42 26" className="w-[42px] h-[26px] shrink-0">
      <path d="M2 23c2-9 8-12 15-13s14 4 20 13z" fill="#86c07f" /><path d="M16 23c1-7 7-9 13-6l4 6z" fill="#4a9a72" />
      <path d="M15 24c3-4 11-4 14 0z" fill="#58b8cf" /><path d="M9 10v12M13 11l-4 5" stroke="#8a6a3a" />
      <circle cx="9" cy="7" r="3.500" fill="#c5b53a" /><circle cx="4" cy="17" r="2" fill="#e39a49" /><circle cx="13" cy="9" r="2.500" fill="#7fae3a" />
      <path d="M30 3l4 8h-2l3 8H25l3-8h-2z" fill="#2c7a5a" /><circle cx="36" cy="13" r="2" fill="#e57e52" /><circle cx="35" cy="20" r="2" fill="#e8a35a" />
      <circle cx="20" cy="14" r="3" fill="#a8d28b" />
    </svg>
  </div>
);

const Taskbar = () => (
  <div className="h-10 shrink-0 flex items-center bg-linear-to-r from-[#1c2023] via-[#1c2022] to-[#261d1f] leading-[13px]">
    <button type="button" className="w-[245px] pl-4 flex items-center gap-1 text-left shrink-0">
      <svg viewBox="0 0 23 26" className="w-[23px] h-[26px]">
        <rect x="1" y="8" width="18" height="14" rx="2" fill="#2a9fd0" /><path d="M15 10h4v12h-4z" fill="#1d6fb0" />
        <path d="M4 18v-6M8 18v-4M12 18v-3M3 19h12" stroke="#fff" strokeWidth="2" />
        <circle cx="16.500" cy="6.500" r="6.500" fill="#b3252b" /><text x="16.500" y="9.500" fontSize="8" fill="#fff" textAnchor="middle">1</text>
      </svg>
      <span><span className="block text-white">Finance headline</span><span className="block text-[#b8bcbf]">India Inflation R...</span></span>
    </button>
    <button type="button" aria-label="Start"><App20><path d="M0 0h9.500v9.500H0zM10.500 0H20v9.500h-9.500zM0 10.500h9.500V20H0zM10.500 10.500H20V20h-9.500z" fill="#45bdf3" /></App20></button>
    <Search />
    <div className="w-[512px] h-full -ml-2 flex shrink-0">
      {apps.map(([name, icon, running]) => (
        <button key={name} type="button" aria-label={name} className="relative flex-1 flex items-center justify-center">
          {icon}
          {running && <span className="absolute bottom-1 w-[5px] h-0.5 rounded bg-[#9a9ea1]" />}
        </button>
      ))}
      <button type="button" aria-label="AutoCAD" className="relative flex-1 h-9 my-0.5 flex items-center justify-center rounded bg-[#25292b]">
        <span className="w-[18px] h-5 rounded-sm border-l-2 border-[#f04a80] bg-[#c9104c] text-white font-bold text-center leading-none flex flex-col items-center justify-center">
          <span className="text-[11px] leading-[11px]">A</span><span className="text-[5px] leading-[5px]">CAD</span>
        </span>
        <span className="absolute bottom-0.5 w-3.5 h-0.5 rounded bg-[#5fc2f5]" />
      </button>
    </div>
    <div className="ml-auto pr-4 flex items-center text-white shrink-0">
      <svg viewBox="0 0 10 6" className="w-2.5 mr-[15px]" fill="none" stroke="#fff" strokeWidth="1.400"><path d="M1 5l4-4 4 4" /></svg>
      <svg viewBox="0 0 14 10" className="w-3.5 mr-[13px]"><path d="M3 10a3 3 0 0 1 0-6 4 4 0 0 1 7.500-1A3.500 3.500 0 0 1 11 10z" fill="#b9bdc0" /><path d="M3 10a3 3 0 0 1 1-5.500C7 4 10 6 11 10z" fill="#f3f4f5" /></svg>
      <svg viewBox="0 0 10 14" className="w-2.5 mr-4" fill="none" stroke="#7fc7c9" strokeWidth="1.200"><rect x="3" y="1" width="4" height="8" rx="2" /><path d="M1 6.500a4 4 0 0 0 8 0M5 10.500V14" /></svg>
      <span className="w-6 text-center mr-[13px]">ENG<br />IN</span>
      <svg viewBox="0 0 14 12" className="w-3.5 mr-1.5" fill="none" stroke="#fff" strokeWidth="1.200"><path d="M1 4.500a8.500 8.500 0 0 1 12 0M3 7a5.500 5.500 0 0 1 8 0M5 9.300a3 3 0 0 1 4 0" /><circle cx="7" cy="11" r=".8" fill="#fff" /></svg>
      <svg viewBox="0 0 14 12" className="w-3.5 mr-1.5" fill="none" stroke="#fff" strokeWidth="1.100"><path d="M1 4.500h2L6 2v8L3 7.500H1zM8 4.500a2.500 2.500 0 0 1 0 3M10 3a5 5 0 0 1 0 6M12 1.500a7 7 0 0 1 0 9" /></svg>
      <svg viewBox="0 0 14 9" className="w-3.5 mr-[13px]" fill="none" stroke="#fff"><rect x=".5" y=".5" width="11" height="8" rx="1.500" /><path d="M2 2h4v5H2z" fill="#fff" /><path d="M13 3v3" strokeWidth="1.500" /></svg>
      <span className="w-[52px] text-right">12:43<br />14-05-2025</span>
    </div>
  </div>
);

const App = () => {
  const [tab, setTab] = useState('Home');

  return (
    <div className="h-screen min-w-[1280px] flex flex-col bg-[#222932] text-[#dce0e4] font-[Roboto,sans-serif] text-[10px] leading-3">
      <TitleBar />
      <RibbonTabs active={tab} onSelect={setTab} />
      <Ribbon />
      <FileTabs />
      <DrawingArea />
      <LayoutTabs />
      <StatusBar />
      <Taskbar />
    </div>
  );
};

export default App;
